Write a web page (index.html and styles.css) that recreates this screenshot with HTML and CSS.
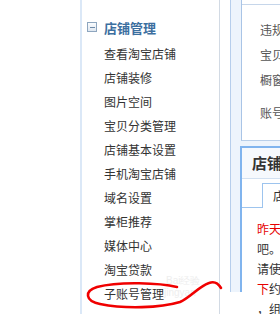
FILE: index.html
```html
<!DOCTYPE html>
<html lang="zh">
<head>
<meta charset="utf-8">
<link rel="stylesheet" href="styles.css">
</head>
<body>
<div class="spacer"></div>
<nav class="sidebar">
  <div class="side-head"><span class="toggle"></span><span class="head-text">店铺管理</span></div>
  <ul class="menu">
    <li>查看淘宝店铺</li>
    <li>店铺装修</li>
    <li>图片空间</li>
    <li>宝贝分类管理</li>
    <li>店铺基本设置</li>
    <li>手机淘宝店铺</li>
    <li>域名设置</li>
    <li>掌柜推荐</li>
    <li>媒体中心</li>
    <li>淘宝贷款</li>
    <li>子账号管理</li>
  </ul>
</nav>
<div class="gap"></div>
<main class="main">
  <section class="panel1">
    <div class="panel1-top"></div>
    <ul class="plist">
      <li>违规</li>
      <li>宝贝</li>
      <li>橱窗</li>
      <li class="far">账号</li>
    </ul>
  </section>
  <section class="panel2">
    <div class="p2-head">店铺</div>
    <div class="tabs"><div class="tab">店铺</div></div>
    <div class="p2-body">
      <p><span class="red">昨天</span></p>
      <p>吧。</p>
      <p>请使用</p>
      <p><span class="red">下</span>约1</p>
      <p>，组锁</p>
    </div>
  </section>
</main>
<div class="cover"></div>
<div class="wm wm1">Bai经验</div>
<div class="wm wm2">jingyan</div>
<svg class="ring" width="280" height="314" viewBox="0 0 280 314">
  <path d="M177 287 C160 283 120 281 97 287 C84 291 85 301 100 304 C125 309 160 308 180 302 C191 297 198 287 209 283 C214 281 218 283 221 288" fill="none" stroke="#f00000" stroke-width="2.6" stroke-linecap="round"/>
</svg>
</body>
</html>
```

FILE: styles.css
```css
html, body {
  margin: 0;
  padding: 0;
}
body {
  width: 280px;
  height: 314px;
  overflow: hidden;
  position: relative;
  display: flex;
  background: #fff;
  font-family: "Noto Sans CJK SC", "Noto Sans", sans-serif;
  font-size: 12px;
  color: #333;
}
ul, p {
  margin: 0;
  padding: 0;
  list-style: none;
}
.spacer {
  width: 80px;
  flex: none;
}
.sidebar {
  width: 137px;
  flex: none;
  border-left: 2px solid #dbe8f7;
  border-right: 1px solid #d2dae4;
  padding-top: 15px;
}
.side-head {
  display: flex;
  align-items: center;
  height: 24px;
  margin-bottom: 3px;
}
.toggle {
  width: 8px;
  height: 8px;
  margin-left: 5px;
  border: 1px solid #8ea6bf;
  background: linear-gradient(#fafcfe, #dfe7f0);
  position: relative;
  flex: none;
}
.toggle::after {
  content: "";
  position: absolute;
  left: 2px;
  top: 4px;
  width: 5px;
  height: 1px;
  background: #6e8aa8;
}
.head-text {
  margin-left: 7px;
  font-size: 13px;
  font-weight: bold;
  color: #3c6f9f;
}
.menu li {
  height: 24px;
  line-height: 24px;
  padding-left: 22px;
  color: #333;
  white-space: nowrap;
}
.gap {
  width: 10px;
  flex: none;
}
.main {
  flex: 1;
  min-width: 0;
  overflow: hidden;
  border-left: 1px solid #b6ceec;
  background: #edf4fc;
  padding-left: 10px;
}
.panel1 {
  background: #fff;
  border-left: 1px solid #a9c4e6;
  border-bottom: 1px solid #b9cfe9;
}
.panel1-top {
  height: 4px;
  border-bottom: 1px solid #c6d6ea;
}
.plist {
  padding: 12px 0 15px 18px;
}
.plist li {
  height: 25px;
  line-height: 25px;
  color: #555;
  white-space: nowrap;
}
.plist .far {
  margin-top: 8px;
}
.panel2 {
  margin-top: 5px;
  margin-left: -1px;
  border-top: 2px solid #80b4ee;
  border-left: 2px solid #80b4ee;
  background: #fff;
  height: 200px;
}
.p2-head {
  height: 30px;
  line-height: 30px;
  padding-left: 10px;
  background: #f6f9fd;
  border-bottom: 1px solid #d3e1f1;
  font-size: 15px;
  font-weight: bold;
  color: #333;
  white-space: nowrap;
}
.tabs {
  height: 28px;
  border-bottom: 1px solid #9dc4ee;
  padding-left: 20px;
  display: flex;
  align-items: flex-end;
}
.tab {
  height: 24px;
  line-height: 24px;
  margin-bottom: -1px;
  border-top: 1px solid #9dc4ee;
  border-left: 1px solid #9dc4ee;
  background: #fff;
  padding-left: 10px;
  white-space: nowrap;
  color: #333;
}
.p2-body {
  padding: 11px 0 0 15px;
}
.p2-body p {
  line-height: 20px;
  height: 20px;
  white-space: nowrap;
  color: #333;
}
.red {
  color: #e60000;
}
.cover {
  position: absolute;
  left: 226px;
  top: 292px;
  width: 28px;
  height: 22px;
  background: #fff;
}
.wm {
  position: absolute;
  font-family: "Liberation Sans", sans-serif;
  font-size: 10px;
  color: #eeeeee;
  white-space: nowrap;
}
.wm1 {
  left: 166px;
  top: 274px;
}
.wm2 {
  left: 164px;
  top: 287px;
}
.ring {
  position: absolute;
  left: 0;
  top: 0;
  pointer-events: none;
}
```
